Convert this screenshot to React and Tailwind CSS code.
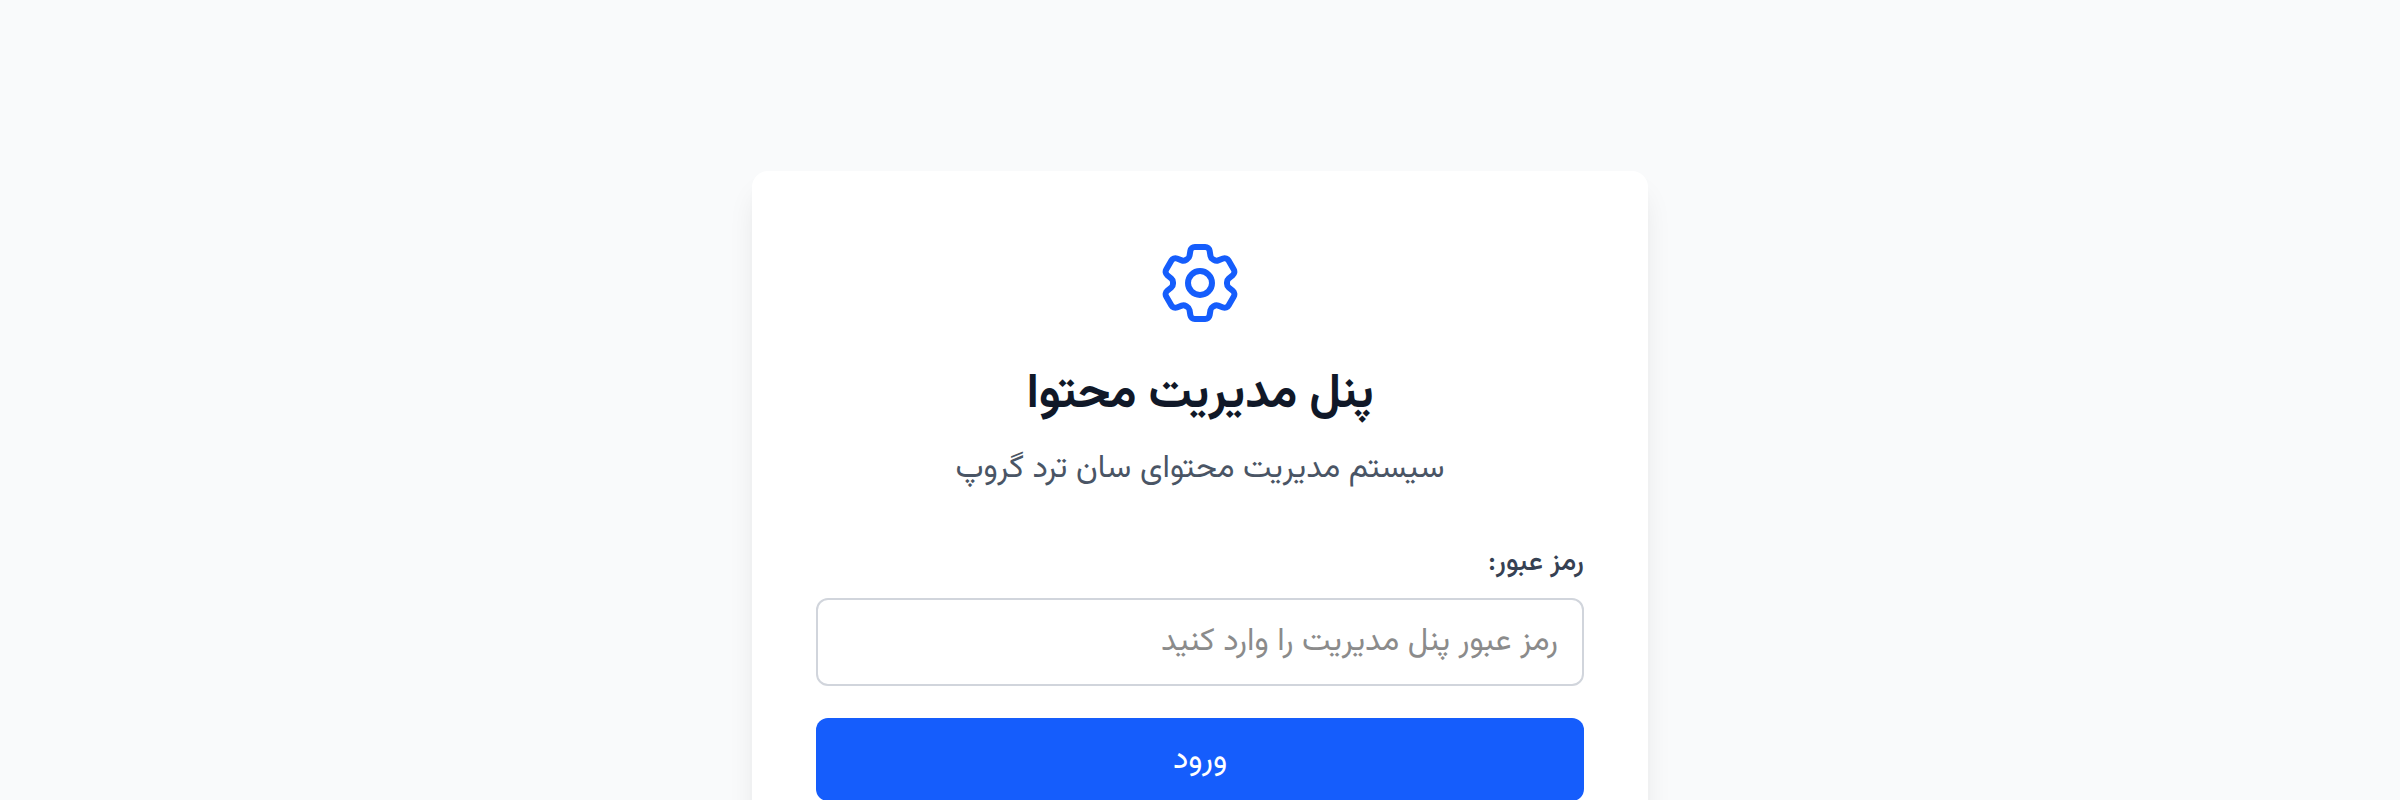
import { HiOutlineCog6Tooth } from "react-icons/hi2";

export default function App() {
  return (
    <div
      dir="rtl"
      className="flex h-[800px] items-start justify-center overflow-hidden bg-gray-50 pt-[171px] font-['Vazirmatn','DejaVu_Sans',sans-serif]"
    >
      <div className="h-[693px] w-[896px] shrink-0 rounded-2xl bg-white p-16 shadow-[0_20px_30px_-6px_rgb(0_0_0/0.1),0_8px_12px_-8px_rgb(0_0_0/0.1)]">
        <div className="flex flex-col items-center text-center">
          <HiOutlineCog6Tooth className="size-24 text-[#155dfc]" />
          <h1 className="mt-[33px] text-[48px] leading-[64px] font-bold whitespace-nowrap text-gray-900">
            پنل مدیریت محتوا
          </h1>
          <p className="mt-[17px] text-[32px] leading-[48px] whitespace-nowrap text-gray-600">
            سیستم مدیریت محتوای سان ترد گروپ
          </p>
        </div>
        <form className="mt-[50px]">
          <label htmlFor="password" className="block text-[28px] leading-[40px] font-medium text-gray-700">
            رمز عبور:
          </label>
          <input
            id="password"
            type="password"
            placeholder="رمز عبور پنل مدیریت را وارد کنید"
            className="mt-[15px] block h-[88px] w-full rounded-xl border-2 border-gray-300 px-6 text-[32px] outline-none placeholder:text-[#8b8b8b]"
          />
          <button
            type="button"
            className="mt-8 flex h-[83px] w-full items-center justify-center rounded-xl bg-[#155dfc] text-[32px] text-white"
          >
            ورود
          </button>
        </form>
      </div>
    </div>
  );
}
